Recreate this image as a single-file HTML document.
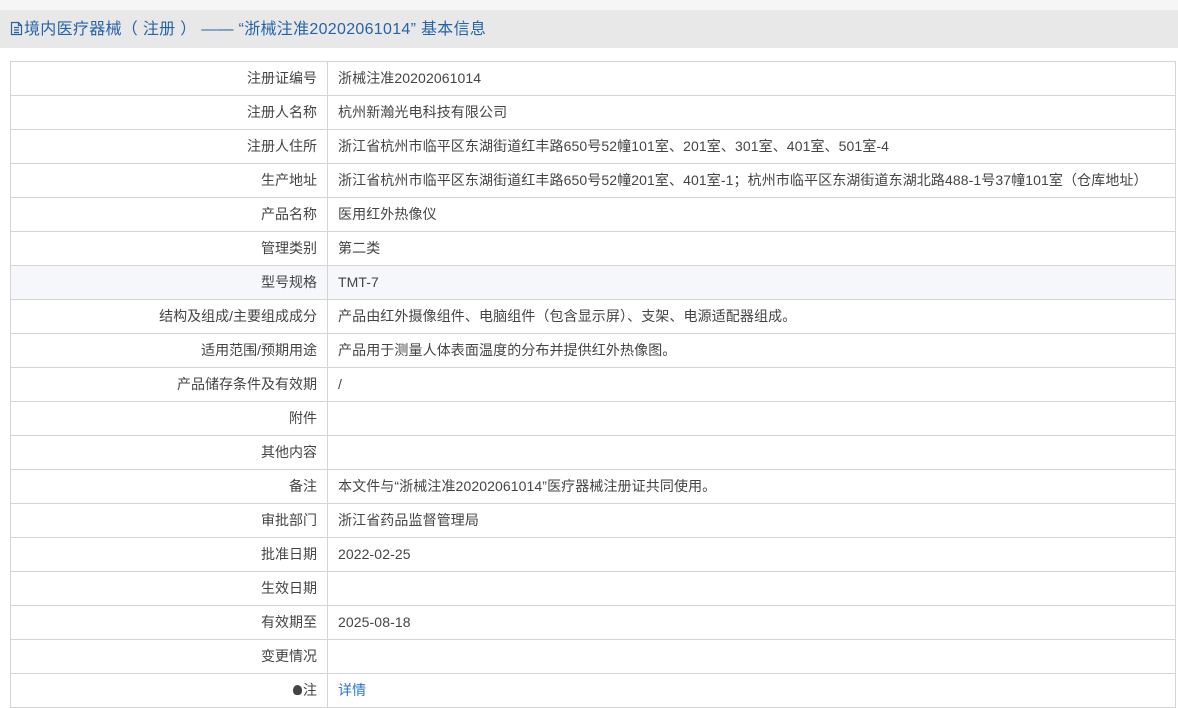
<!DOCTYPE html>
<html><head><meta charset="utf-8"><style>
body{margin:0;background:#fff;font-family:"Liberation Sans","Noto Sans CJK SC",sans-serif;font-size:14px;color:#333;}
.top{height:10px;background:#f6f6f6;}
.hd{height:38px;background:#e8e8e8;color:#2563a8;font-size:16px;line-height:40px;padding-left:10px;white-space:nowrap;letter-spacing:0.3px}
.hd svg{vertical-align:-2px;margin-right:1px}
table{position:absolute;left:10px;top:61px;width:1166px;border-collapse:collapse;}
td{height:33px;border:1px solid #d4d4d4;padding:0;vertical-align:middle;line-height:33px;}
td.l{width:306px;text-align:right;padding-right:10px;color:#444;}
td.v{padding-left:10px;color:#444;letter-spacing:0.1px}
tr.alt td{background:#f5f7fb;}
a{color:#2a72d4;text-decoration:none}
</style></head><body>
<div class="top"></div>
<div class="hd"><svg width="13" height="15" viewBox="0 0 13 15"><path d="M1.5 1.5h7l3 3v9h-10z M8.5 1.5v3h3 M4 6.5h5 M4 9h5 M4 11.5h5" fill="none" stroke="#2563a8" stroke-width="1.2"/></svg>境内医疗器械（ 注册 ） —— “浙械注准20202061014” 基本信息</div>
<table>
<tr><td class="l">注册证编号</td><td class="v">浙械注准20202061014</td></tr>
<tr><td class="l">注册人名称</td><td class="v">杭州新瀚光电科技有限公司</td></tr>
<tr><td class="l">注册人住所</td><td class="v">浙江省杭州市临平区东湖街道红丰路650号52幢101室、201室、301室、401室、501室-4</td></tr>
<tr><td class="l">生产地址</td><td class="v">浙江省杭州市临平区东湖街道红丰路650号52幢201室、401室-1；杭州市临平区东湖街道东湖北路488-1号37幢101室（仓库地址）</td></tr>
<tr><td class="l">产品名称</td><td class="v">医用红外热像仪</td></tr>
<tr><td class="l">管理类别</td><td class="v">第二类</td></tr>
<tr class="alt"><td class="l">型号规格</td><td class="v">TMT-7</td></tr>
<tr><td class="l">结构及组成/主要组成成分</td><td class="v">产品由红外摄像组件、电脑组件（包含显示屏）、支架、电源适配器组成。</td></tr>
<tr><td class="l">适用范围/预期用途</td><td class="v">产品用于测量人体表面温度的分布并提供红外热像图。</td></tr>
<tr><td class="l">产品储存条件及有效期</td><td class="v">/</td></tr>
<tr><td class="l">附件</td><td class="v"></td></tr>
<tr><td class="l">其他内容</td><td class="v"></td></tr>
<tr><td class="l">备注</td><td class="v">本文件与“浙械注准20202061014”医疗器械注册证共同使用。</td></tr>
<tr><td class="l">审批部门</td><td class="v">浙江省药品监督管理局</td></tr>
<tr><td class="l">批准日期</td><td class="v">2022-02-25</td></tr>
<tr><td class="l">生效日期</td><td class="v"></td></tr>
<tr><td class="l">有效期至</td><td class="v">2025-08-18</td></tr>
<tr><td class="l">变更情况</td><td class="v"></td></tr>
<tr><td class="l"><span style="display:inline-block;width:9px;height:10px;border-radius:50% 50% 40% 40%;background:#444;vertical-align:0;margin-right:1px"></span>注</td><td class="v"><a>详情</a></td></tr>
</table>
</body></html>
